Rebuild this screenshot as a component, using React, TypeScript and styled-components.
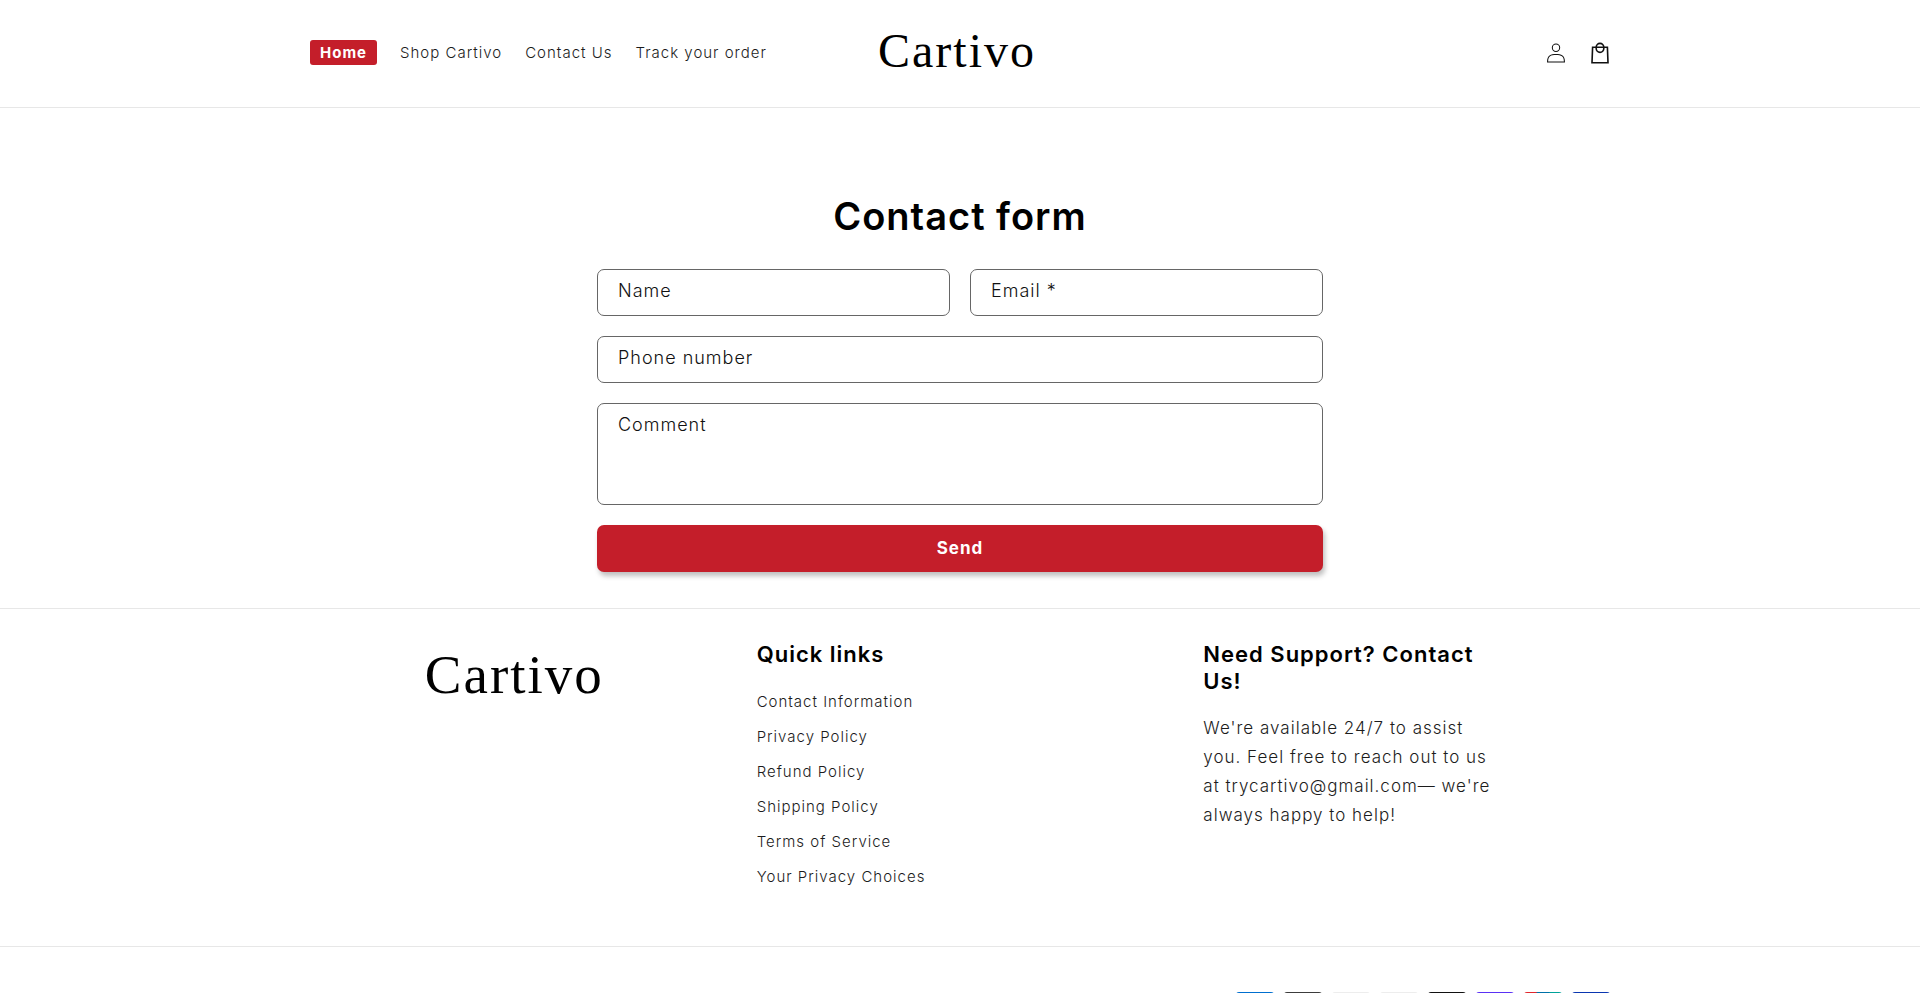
import React from "react";
import styled, { createGlobalStyle } from "styled-components";

const sans = `Inter, "Liberation Sans", sans-serif`;
const serif = `"Liberation Serif", "Times New Roman", serif`;
const red = "#c41e2a";
const rule = "#e7e7e7";

const GlobalStyle = createGlobalStyle`
  *, *::before, *::after { box-sizing: border-box; }
  body {
    margin: 0;
    background: #fff;
    color: #1c1c1c;
    font-family: ${sans};
    font-size: 17px;
    font-weight: 300;
    letter-spacing: 1px;
  }
  a { color: inherit; text-decoration: none; }
  h1, h2, p, ul { margin: 0; padding: 0; }
  ul { list-style: none; }
`;

const PageWidth = styled.div`
  width: 100%;
  max-width: 1400px;
  margin: 0 auto;
  padding: 0 50px;
`;

const Header = styled.header`
  border-bottom: 1px solid ${rule};
`;

const HeaderRow = styled(PageWidth)`
  display: grid;
  grid-template-columns: 1fr auto 1fr;
  align-items: center;
  padding-top: 19px;
  padding-bottom: 21px;
`;

const Nav = styled.nav`
  display: flex;
  align-items: center;
  gap: 23px;
  font-size: 15px;
  line-height: 25px;
`;

const NavLink = styled.a<{ $active?: boolean }>`
  ${(p) =>
    p.$active &&
    `padding: 0 10px;
     border-radius: 3px;
     background: ${red};
     color: #fff;
     font-weight: 700;`}
`;

const Wordmark = styled.a`
  display: inline-block;
  padding: 0 6px 4px 0;
  font-family: ${serif};
  font-size: 48px;
  font-weight: 400;
  line-height: 63px;
  letter-spacing: 2px;
  color: #000;
`;

const FooterWordmark = styled(Wordmark)`
  padding: 0 0 0 2px;
  font-size: 55px;
  line-height: 68px;
`;

const Actions = styled.div`
  display: flex;
  justify-content: flex-end;
`;

const IconButton = styled.a`
  display: grid;
  place-items: center;
  width: 44px;
  height: 44px;
  color: #111;
  &:last-child { margin-right: -12px; }
`;

const FormSection = styled.main`
  width: 100%;
  max-width: 726px;
  margin: 0 auto;
  padding: 80px 0 36px;
`;

const Title = styled.h1`
  margin-bottom: 25px;
  font-size: 38px;
  line-height: 56px;
  font-weight: 600;
  text-align: center;
  color: #000;
`;

const Form = styled.form`
  display: grid;
  grid-template-columns: 1fr 1fr;
  gap: 20px;
`;

const Field = styled.div<{ $wide?: boolean }>`
  position: relative;
  display: flex;
  ${(p) => p.$wide && "grid-column: 1 / -1;"}
`;

const control = `
  width: 100%;
  padding: 10px 20px;
  border: 1px solid #666;
  border-radius: 7px;
  background: transparent;
  color: #111;
  font: inherit;
  letter-spacing: inherit;
`;

const Input = styled.input`
  ${control}
  height: 47px;
`;

const TextArea = styled.textarea`
  ${control}
  height: 102px;
  resize: none;
`;

const FieldLabel = styled.label`
  position: absolute;
  left: 21px;
  top: 10px;
  font-size: 18px;
  line-height: 24px;
  color: #111;
  pointer-events: none;
  input:not(:placeholder-shown) + &,
  textarea:not(:placeholder-shown) + & { display: none; }
`;

const SendButton = styled.button`
  grid-column: 1 / -1;
  height: 47px;
  padding: 0 0 2px;
  border: 0;
  border-radius: 7px;
  background: ${red};
  box-shadow: 2px 4px 5px rgba(0, 0, 0, 0.25);
  color: #fff;
  font: inherit;
  font-weight: 700;
  letter-spacing: inherit;
`;

const Footer = styled.footer`
  border-top: 1px solid ${rule};
`;

const FooterColumns = styled(PageWidth)`
  display: grid;
  grid-template-columns: repeat(3, 1fr);
  gap: 40px;
  padding-top: 32px;
  padding-bottom: 52px;
`;

const LogoColumn = styled.div`
  text-align: center;
`;

const FooterTitle = styled.h2`
  margin-bottom: 16px;
  font-size: 22px;
  line-height: 27px;
  font-weight: 600;
  color: #000;
`;

const LinkList = styled.ul`
  font-size: 15px;
  line-height: 35px;
`;

const Support = styled.div`
  max-width: 300px;
`;

const SupportText = styled.p`
  padding-top: 3px;
  line-height: 29px;
`;

const FooterBottom = styled.div`
  border-top: 1px solid ${rule};
`;

const Payments = styled(PageWidth).attrs({ as: "ul" })`
  && {
    display: flex;
    justify-content: flex-end;
    gap: 10px;
    margin: 0 auto;
    padding: 45px 50px 36px;
  }
  li, svg { display: block; }
`;

const navItems = ["Shop Cartivo", "Contact Us", "Track your order"];

const quickLinks = [
  "Contact Information",
  "Privacy Policy",
  "Refund Policy",
  "Shipping Policy",
  "Terms of Service",
  "Your Privacy Choices",
];

const cards: { name: string; fills: string[] }[] = [
  { name: "American Express", fills: ["#006fcf"] },
  { name: "Apple Pay", fills: ["#3c3c3c"] },
  { name: "Diners Club", fills: ["#ededed"] },
  { name: "Discover", fills: ["#ededed"] },
  { name: "Mastercard", fills: ["#111111"] },
  { name: "Shop Pay", fills: ["#5a31f4"] },
  { name: "Union Pay", fills: ["#e1272d", "#0071a8", "#00a29a"] },
  { name: "Visa", fills: ["#0a36b0"] },
];

function AccountIcon() {
  return (
    <svg width="20" height="20" viewBox="0 0 18 19" fill="currentColor" aria-hidden="true">
      <path
        fillRule="evenodd"
        d="M6 4.5a3 3 0 116 0 3 3 0 01-6 0zm3-4a4 4 0 100 8 4 4 0 000-8zm5.58 12.15c1.12.82 1.83 2.24 1.91 4.85H1.51c.08-2.6.79-4.03 1.9-4.85C4.66 11.75 6.5 11.5 9 11.5s4.35.26 5.58 1.15zM9 10.5c-2.5 0-4.65.24-6.17 1.35C1.27 12.98.5 14.93.5 18v.5h17V18c0-3.07-.77-5.02-2.33-6.15-1.52-1.1-3.67-1.35-6.17-1.35z"
      />
    </svg>
  );
}

function BagIcon() {
  return (
    <svg width="18" height="22" viewBox="0 0 18 22" fill="none" stroke="currentColor" strokeWidth="1.6" aria-hidden="true">
      <path d="M1.6 5.2h14.8l.6 15.6H1z" />
      <path d="M5.2 5.2a3.8 3.8 0 0 1 7.6 0v1.4a3.8 3.8 0 0 1-7.6 0z" />
    </svg>
  );
}

function PaymentCard({ name, fills }: { name: string; fills: string[] }) {
  const clip = "card-" + name.replace(/\s/g, "");
  return (
    <svg width="38" height="24" viewBox="0 0 38 24" role="img" aria-label={name}>
      <clipPath id={clip}>
        <rect width="38" height="24" rx="3" />
      </clipPath>
      <g clipPath={`url(#${clip})`}>
        {fills.map((fill, i) => (
          <rect key={fill} x={(i * 38) / fills.length} width={38 / fills.length + 1} height="24" fill={fill} />
        ))}
      </g>
    </svg>
  );
}

export default function App() {
  return (
    <>
      <GlobalStyle />
      <Header>
        <HeaderRow>
          <Nav>
            <NavLink href="#home" $active>
              Home
            </NavLink>
            {navItems.map((item) => (
              <NavLink href="#nav" key={item}>
                {item}
              </NavLink>
            ))}
          </Nav>
          <Wordmark href="#home">Cartivo</Wordmark>
          <Actions>
            <IconButton href="#account" aria-label="Log in">
              <AccountIcon />
            </IconButton>
            <IconButton href="#cart" aria-label="Cart">
              <BagIcon />
            </IconButton>
          </Actions>
        </HeaderRow>
      </Header>

      <FormSection>
        <Title>Contact form</Title>
        <Form onSubmit={(e) => e.preventDefault()}>
          <Field>
            <Input id="name" type="text" placeholder=" " />
            <FieldLabel htmlFor="name">Name</FieldLabel>
          </Field>
          <Field>
            <Input id="email" type="email" required placeholder=" " />
            <FieldLabel htmlFor="email">Email *</FieldLabel>
          </Field>
          <Field $wide>
            <Input id="phone" type="tel" placeholder=" " />
            <FieldLabel htmlFor="phone">Phone number</FieldLabel>
          </Field>
          <Field $wide>
            <TextArea id="comment" placeholder=" " />
            <FieldLabel htmlFor="comment">Comment</FieldLabel>
          </Field>
          <SendButton type="submit">Send</SendButton>
        </Form>
      </FormSection>

      <Footer>
        <FooterColumns>
          <LogoColumn>
            <FooterWordmark href="#home">Cartivo</FooterWordmark>
          </LogoColumn>
          <div>
            <FooterTitle>Quick links</FooterTitle>
            <LinkList>
              {quickLinks.map((link) => (
                <li key={link}>
                  <a href="#policy">{link}</a>
                </li>
              ))}
            </LinkList>
          </div>
          <Support>
            <FooterTitle>Need Support? Contact Us!</FooterTitle>
            <SupportText>
              We're available 24/7 to assist you. Feel free to reach out to us at trycartivo@gmail.com— we're always
              happy to help!
            </SupportText>
          </Support>
        </FooterColumns>
        <FooterBottom>
          <Payments>
            {cards.map((card) => (
              <li key={card.name}>
                <PaymentCard {...card} />
              </li>
            ))}
          </Payments>
        </FooterBottom>
      </Footer>
    </>
  );
}
